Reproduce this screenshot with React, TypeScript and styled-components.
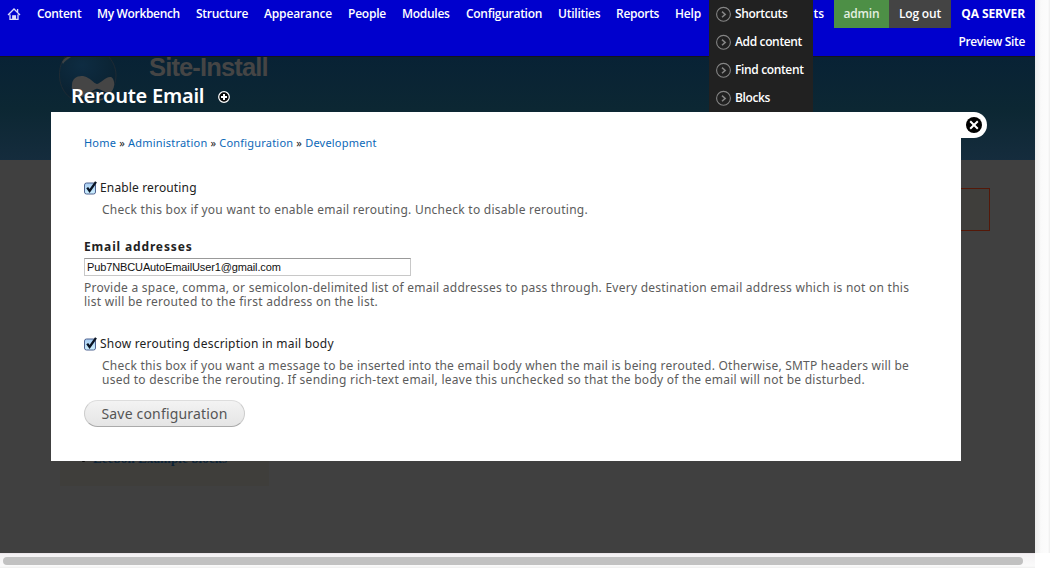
import React from "react";
import styled, { createGlobalStyle } from "styled-components";

const GlobalStyle = createGlobalStyle`
  *, *::before, *::after { box-sizing: border-box; }
  html, body { margin: 0; padding: 0; background: #fff; }
  body { width: 1050px; height: 568px; overflow: hidden; }
  a { color: inherit; text-decoration: none; }
`;

const Window = styled.div`
  display: grid;
  grid-template-columns: 1035px 15px;
  grid-template-rows: 553px 15px;
  width: 1050px;
  height: 568px;
  font-family: "Open Sans", "Noto Sans", sans-serif;
`;

const Viewport = styled.div`
  position: relative;
  display: flex;
  flex-direction: column;
  overflow: hidden;
  background: #404040;
`;

const Toolbar = styled.header`
  display: flex;
  justify-content: space-between;
  height: 57px;
  flex: none;
  background: #0000cd;
  border-bottom: 1px solid #14141c;
  color: #fff;
  font-size: 12px;
  font-weight: 600;
  line-height: 28px;
`;

const MainMenu = styled.nav`
  display: flex;
  height: 28px;
  padding-left: 7px;
`;

const HomeLink = styled.a`
  display: flex;
  width: 30px;
  padding-top: 7px;
`;

const MenuLink = styled.a<{ $w: number; $ls?: number }>`
  width: ${(p) => p.$w}px;
  white-space: nowrap;
  letter-spacing: ${(p) => p.$ls ?? 0}px;
`;

const ToolbarEnd = styled.div`
  display: flex;
  height: 28px;
`;

const ShortcutsToggle = styled.a`
  padding-right: 10px;
  white-space: nowrap;
  letter-spacing: -0.1px;
`;

const UserTab = styled.a<{ $bg: string; $w: number; $color: string }>`
  width: ${(p) => p.$w}px;
  background: ${(p) => p.$bg};
  color: ${(p) => p.$color};
  text-align: center;
  letter-spacing: -0.2px;
`;

const ServerInfo = styled.div`
  display: flex;
  flex-direction: column;
  width: 84px;
  padding-right: 10px;
  text-align: right;
  white-space: nowrap;
  letter-spacing: -0.34px;
`;

const ServerName = styled.span`
  font-weight: 700;
  letter-spacing: -0.1px;
`;

const SiteHeader = styled.div`
  display: flex;
  height: 103px;
  flex: none;
  padding-left: 58px;
  background: linear-gradient(#082235 0, #0c2733 52px, #152c3d 104px);
`;

const SiteName = styled.div`
  margin: -7px 0 0 31px;
  color: #454545;
  font: 700 25.5px/34px "Liberation Sans", Arial, sans-serif;
  letter-spacing: -0.85px;
`;

const Notice = styled.div`
  width: 930px;
  height: 43px;
  margin: 28px 0 0 60px;
  flex: none;
  border: 1px solid #541808;
  background: #3f3e3b;
`;

const Sidebar = styled.div`
  width: 209px;
  height: 255px;
  margin: 0 0 0 60px;
  padding: 218px 0 0 33px;
  background: #3f3e3b;
  color: #0c2338;
  font: 700 13px/20px "Liberation Serif", Georgia, serif;
  letter-spacing: 0.1px;
`;

const Bullet = styled.span`
  display: inline-block;
  width: 3px;
  height: 3px;
  margin: 0 8px 1px -11px;
  border-radius: 1px;
  background: #0a0a0a;
`;

const ShortcutMenu = styled.div`
  position: absolute;
  left: 709px;
  top: 0;
  width: 104px;
  height: 112px;
  padding-left: 7px;
  background: #212121;
  color: #fff;
  font-size: 12px;
  font-weight: 600;
  line-height: 28px;
  letter-spacing: -0.36px;
`;

const ShortcutRow = styled.a`
  display: flex;
  align-items: center;
  gap: 3px;
  height: 28px;
  white-space: nowrap;
`;

const ShortcutIcon = styled.svg`
  width: 16px;
  height: 16px;
  flex: none;
`;

const Overlay = styled.section`
  position: absolute;
  left: 51px;
  top: 80px;
  width: 936px;
`;

const OverlayTitle = styled.div`
  display: flex;
  align-items: center;
  gap: 14px;
  height: 32px;
  padding-left: 20px;
  padding-top: 1px;
`;

const Heading = styled.h1`
  margin: -1px 0 0;
  color: #fff;
  font: 600 20px/32px "Noto Sans", sans-serif;
  letter-spacing: -0.24px;
`;

const OverlayRow = styled.div`
  display: flex;
  align-items: flex-start;
`;

const Panel = styled.div`
  width: 910px;
  height: 349px;
  padding: 23px 33px 0;
  background: #fff;
  color: #222;
  font: 12px/14px "Noto Sans", "Open Sans", sans-serif;
`;

const CloseTab = styled.button`
  display: flex;
  width: 26px;
  height: 26px;
  padding: 5px 0 0 5px;
  border: 0;
  border-radius: 0 13px 13px 0;
  background: #fff;
  align-items: flex-start;
`;

const Breadcrumb = styled.div`
  height: 16px;
  font-size: 11px;
  line-height: 16px;
  letter-spacing: 0.2px;
  white-space: nowrap;
  a { color: #0b68b8; }
`;

const CheckRow = styled.label<{ $top: number; $ls: number }>`
  display: flex;
  align-items: center;
  gap: 3px;
  height: 16px;
  margin-top: ${(p) => p.$top}px;
  line-height: 16px;
  letter-spacing: ${(p) => p.$ls}px;
`;

const CheckIcon = styled.svg`
  width: 13px;
  height: 14px;
  flex: none;
`;

const Line = styled.div<{ $ls: number }>`
  height: 14px;
  color: #5c5c5c;
  white-space: nowrap;
  letter-spacing: ${(p) => p.$ls}px;
`;

const Description = styled.div<{ $indent?: boolean; $top: number }>`
  margin-top: ${(p) => p.$top}px;
  padding-left: ${(p) => (p.$indent ? 18 : 0)}px;
`;

const FieldLabel = styled.label`
  display: block;
  height: 16px;
  margin-top: 22px;
  font-weight: 700;
  line-height: 16px;
  letter-spacing: 0.85px;
`;

const TextField = styled.input`
  display: block;
  width: 327px;
  height: 18px;
  margin-top: 3px;
  padding: 0 2px;
  border: 1px solid #c8c8c8;
  border-top-color: #999;
  border-radius: 0;
  outline: 0;
  background: #fff;
  color: #111;
  font: 11px/16px "Liberation Sans", Arial, sans-serif;
  letter-spacing: -0.12px;
`;

const SaveButton = styled.button`
  display: block;
  width: 161px;
  height: 27px;
  margin-top: 13px;
  padding: 1px 0 0;
  border: 1px solid #ccc;
  border-top-color: #ddd;
  border-bottom-color: #aaa;
  border-radius: 14px;
  background: linear-gradient(#f3f3f3, #e5e5e5);
  color: #555;
  font: 14px/24px "Noto Sans", sans-serif;
  letter-spacing: 0.18px;
  white-space: nowrap;
`;

const VerticalTrack = styled.div`
  background: linear-gradient(90deg, #ececec, #fafafa 6px, #fcfcfc 13px, #ededed);
`;

const HorizontalTrack = styled.div`
  padding: 4px 12px 0 3px;
  border-top: 1px solid #ebe6ea;
  background: linear-gradient(#f3f1f3, #fafafa 12px, #eee);
`;

const Thumb = styled.div`
  height: 8px;
  margin-top: -1px;
  border-radius: 4px;
  background: #c1c1c1;
`;

const menu: [string, number, number][] = [
  ["Content", 60, -0.32],
  ["My Workbench", 99, -0.34],
  ["Structure", 68, -0.28],
  ["Appearance", 84, -0.14],
  ["People", 54, -0.22],
  ["Modules", 64, -0.28],
  ["Configuration", 92, -0.28],
  ["Utilities", 58, -0.24],
  ["Reports", 59, -0.28],
  ["Help", 34, -0.2],
];

const Check = () => (
  <CheckIcon viewBox="0 0 13 14">
    <defs>
      <linearGradient id="aqua" x1="0" y1="0" x2="0" y2="1">
        <stop offset="0" stopColor="#a9cdf2" />
        <stop offset="1" stopColor="#cdf0ff" />
      </linearGradient>
    </defs>
    <rect x="0.5" y="2" width="11" height="11" rx="2" fill="url(#aqua)" stroke="#4f6390" />
    <path d="M3.2 6.6 L5.6 10 L12 0.8" fill="none" stroke="#0a1424" strokeWidth="2.3" />
  </CheckIcon>
);

export default function App() {
  return (
    <>
      <GlobalStyle />
      <Window>
        <Viewport>
          <Toolbar>
            <MainMenu>
              <HomeLink>
                <svg width="14" height="14" viewBox="0 0 14 14" fill="none" stroke="#dcdcfa" strokeWidth="1.3">
                  <path d="M1 8 L7 2 L13 8 M3 7.4 V12.4 H11 V7.4 M10.6 5 V2" />
                  <path d="M5.8 12.5 V8.8 H8.4 V12.5" fill="#dcdcfa" />
                </svg>
              </HomeLink>
              {menu.map(([label, w, ls]) => (
                <MenuLink key={label} $w={w} $ls={ls}>{label}</MenuLink>
              ))}
            </MainMenu>
            <ToolbarEnd>
              <ShortcutsToggle>ts</ShortcutsToggle>
              <UserTab $bg="#4d8f46" $w={55} $color="#e4f0e0">admin</UserTab>
              <UserTab $bg="#444" $w={62} $color="#fff">Log out</UserTab>
              <ServerInfo>
                <ServerName>QA SERVER</ServerName>
                <span>Preview Site</span>
              </ServerInfo>
            </ToolbarEnd>
          </Toolbar>

          <SiteHeader>
            <svg width="60" height="60" viewBox="0 1 60 60">
              <defs>
                <radialGradient id="drop" cx="0.4" cy="0.2" r="0.8">
                  <stop offset="0" stopColor="#0e2c42" />
                  <stop offset="1" stopColor="#0a202e" />
                </radialGradient>
              </defs>
              <path d="M8 0 C3 6 1.5 12 1.5 19 C1.5 36 14 47 29 47 C45 47 58 35 58 19 C58 11 54 4 50 0 Z" fill="url(#drop)" stroke="#232c33" strokeWidth="0.8" />
              <path d="M4 6 C7 1 11 0 15 0 C11 2 7 5 5 8 Z" fill="#3c4245" />
              <path d="M14 29 C14 20 24 18 30 22 C34 24 37 28 39 28 C43 27 48 20 53 21 C58 23 57 36 51 37 C46 37 42 32 38 33 C33 34 30 41 22 41 C16 40 13 34 14 29 Z" fill="#454545" />
              <path d="M34 38 Q38 34 42 38 M29 43 Q36 46 45 43" stroke="#454545" strokeWidth="1.5" fill="none" />
            </svg>
            <SiteName>Site-Install</SiteName>
          </SiteHeader>
          <Notice />
          <Sidebar><Bullet />Leebon Example blocks</Sidebar>

          <ShortcutMenu>
            {["Shortcuts", "Add content", "Find content", "Blocks"].map((s) => (
              <ShortcutRow key={s}>
                <ShortcutIcon viewBox="0 0 16 16" fill="none" stroke="#858585">
                  <circle cx="7.5" cy="8.3" r="6.9" strokeWidth="1.1" />
                  <path d="M6 5.6 L9.2 8.4 L6 11.2" strokeWidth="1.5" />
                </ShortcutIcon>
                {s}
              </ShortcutRow>
            ))}
          </ShortcutMenu>

          <Overlay>
            <OverlayTitle>
              <Heading>Reroute Email</Heading>
              <svg width="12" height="12" viewBox="0 0 12 12">
                <circle cx="6" cy="6" r="5.3" fill="#050505" stroke="#fff" strokeWidth="1.2" />
                <path d="M6 3 V9 M3 6 H9" stroke="#fff" strokeWidth="2" />
              </svg>
            </OverlayTitle>
            <OverlayRow>
              <Panel>
                <Breadcrumb>
                  <a>Home</a> » <a>Administration</a> » <a>Configuration</a> » <a>Development</a>
                </Breadcrumb>
                <CheckRow $top={29} $ls={0.15}><Check />Enable rerouting</CheckRow>
                <Description $indent $top={7}>
                  <Line $ls={0.25}>Check this box if you want to enable email rerouting. Uncheck to disable rerouting.</Line>
                </Description>
                <FieldLabel>Email addresses</FieldLabel>
                <TextField defaultValue="Pub7NBCUAutoEmailUser1@gmail.com" />
                <Description $top={5}>
                  <Line $ls={0.25}>Provide a space, comma, or semicolon-delimited list of email addresses to pass through. Every destination email address which is not on this</Line>
                  <Line $ls={0.27}>list will be rerouted to the first address on the list.</Line>
                </Description>
                <CheckRow $top={27} $ls={0.22}><Check />Show rerouting description in mail body</CheckRow>
                <Description $indent $top={7}>
                  <Line $ls={0.225}>Check this box if you want a message to be inserted into the email body when the mail is being rerouted. Otherwise, SMTP headers will be</Line>
                  <Line $ls={0.26}>used to describe the rerouting. If sending rich-text email, leave this unchecked so that the body of the email will not be disturbed.</Line>
                </Description>
                <SaveButton>Save configuration</SaveButton>
              </Panel>
              <CloseTab aria-label="Close">
                <svg width="16" height="16" viewBox="0 0 16 16">
                  <circle cx="8" cy="8" r="8" fill="#000" />
                  <path d="M4.2 4.2 L11.8 11.8 M11.8 4.2 L4.2 11.8" stroke="#fff" strokeWidth="2" />
                </svg>
              </CloseTab>
            </OverlayRow>
          </Overlay>
        </Viewport>
        <VerticalTrack />
        <HorizontalTrack><Thumb /></HorizontalTrack>
      </Window>
    </>
  );
}
